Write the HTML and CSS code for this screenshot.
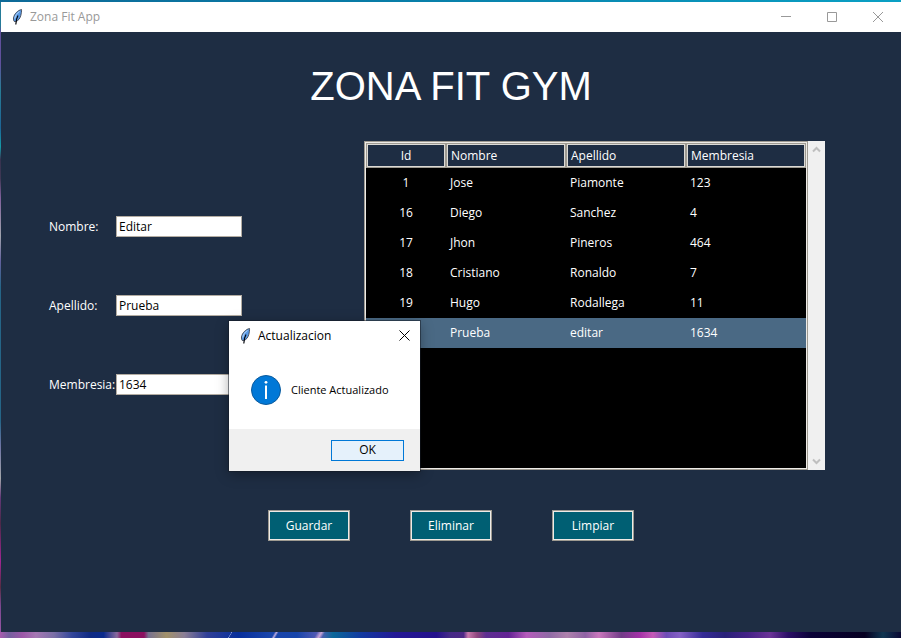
FILE: index.html
```html
<!DOCTYPE html>
<html lang="es">
<head>
<meta charset="utf-8">
<title>Zona Fit App</title>
<link rel="stylesheet" href="styles.css">
</head>
<body>
<svg class="defs" aria-hidden="true">
  <symbol id="feather" viewBox="0 0 16 16">
    <path d="M12.500.5C9 1.200 5 5 4.500 9c-.1 1.500 0 2.500.8 3.500L6.500 12.500c3-.8 4.500-3 5.300-6C12.300 4.500 12.700 2 12.500.5z" fill="#5b9be6" stroke="#30343d" stroke-width=".8"/>
    <path d="M10.500 2.500C8 4 6.300 6.500 5.800 9.500" fill="none" stroke="#b9d8fa"/>
    <path d="M9 6.500C7.800 8.500 7 11 6.800 15.500" fill="none" stroke="#05070c" stroke-width="1.200"/>
  </symbol>
</svg>
<div class="window">
  <header class="titlebar">
    <svg class="feather"><use href="#feather"/></svg>
    <span class="titlebar-text">Zona Fit App</span>
    <div class="controls">
      <button class="control" aria-label="Minimizar"><svg viewBox="0 0 10 10"><path d="M0 4.500h10"/></svg></button>
      <button class="control" aria-label="Maximizar"><svg viewBox="0 0 10 10"><path d="M.5.5h9v9h-9z"/></svg></button>
      <button class="control" aria-label="Cerrar"><svg viewBox="0 0 10 10"><path d="M0 0l10 10M10 0L0 10"/></svg></button>
    </div>
  </header>
  <main class="app">
    <h1 class="heading">ZONA FIT GYM</h1>
    <div class="content">
      <form class="form">
        <label for="nombre">Nombre:</label><input id="nombre" type="text" value="Editar">
        <label for="apellido">Apellido:</label><input id="apellido" type="text" value="Prueba">
        <label for="membresia">Membresia:</label><input id="membresia" type="text" value="1634">
      </form>
      <div class="list">
        <div class="tree">
          <table>
            <colgroup><col class="col-id"><col><col><col></colgroup>
            <thead><tr><th>Id</th><th>Nombre</th><th>Apellido</th><th>Membresia</th></tr></thead>
            <tbody>
              <tr><td>1</td><td>Jose</td><td>Piamonte</td><td>123</td></tr>
              <tr><td>16</td><td>Diego</td><td>Sanchez</td><td>4</td></tr>
              <tr><td>17</td><td>Jhon</td><td>Pineros</td><td>464</td></tr>
              <tr><td>18</td><td>Cristiano</td><td>Ronaldo</td><td>7</td></tr>
              <tr><td>19</td><td>Hugo</td><td>Rodallega</td><td>11</td></tr>
              <tr class="selected"><td></td><td>Prueba</td><td>editar</td><td>1634</td></tr>
            </tbody>
          </table>
        </div>
        <div class="scrollbar">
          <button class="arrow" aria-label="Subir" disabled><svg viewBox="0 0 9 7"><path d="M1 5.500l3.500-3.500L8 5.500"/></svg></button>
          <button class="arrow" aria-label="Bajar" disabled><svg viewBox="0 0 9 7"><path d="M1 1.500L4.500 5 8 1.500"/></svg></button>
        </div>
      </div>
    </div>
    <div class="actions">
      <button class="action">Guardar</button>
      <button class="action">Eliminar</button>
      <button class="action">Limpiar</button>
    </div>
  </main>
  <dialog class="dialog" open aria-labelledby="dialog-title">
    <div class="dialog-bar">
      <svg class="feather"><use href="#feather"/></svg>
      <span id="dialog-title">Actualizacion</span>
      <button class="dialog-close" aria-label="Cerrar"><svg viewBox="0 0 11 11"><path d="M.5.5l10 10M10.500.5l-10 10"/></svg></button>
    </div>
    <div class="dialog-body">
      <svg class="info" viewBox="0 0 30 30">
        <circle cx="15" cy="15" r="14.500" fill="#0078d7" stroke="#0b5a9c"/>
        <path d="M15 10.500v13.500" stroke="#fff" stroke-width="2"/>
        <circle cx="15" cy="7.300" r="1.400" fill="#fff"/>
      </svg>
      <span class="message">Cliente Actualizado</span>
    </div>
    <div class="dialog-footer"><button class="ok">OK</button></div>
  </dialog>
</div>
</body>
</html>
```
FILE: styles.css
```css
* {
  box-sizing: border-box;
}

body {
  margin: 0;
  min-height: 100vh;
  padding: 2px 0 6px 1px;
  display: flex;
  font: 12px/16px "Open Sans", "Noto Sans", sans-serif;
  background:
    linear-gradient(90deg, #0d6a98, #087ba6 40%, #0aa0c4) top / 100% 2px no-repeat,
    linear-gradient(120deg, transparent 49%, #8fa3dd 50%, transparent 52%) 210px bottom / 40px 6px no-repeat,
    linear-gradient(120deg, transparent 45%, #b9a9dd 50%, transparent 55%) 255px bottom / 40px 6px no-repeat,
    linear-gradient(120deg, transparent 40%, #c9a6d6 50%, transparent 58%) 300px bottom / 40px 6px no-repeat,
    linear-gradient(90deg,
      #a85cae 0, #75609f 2%, #9c58a8 5%, #a578b3 8%, #7a6fa6 12%, #33469a 16%, #102b83 20%, #0b2b8c 23%,
      #8a6a9c 26%, #8b1060 27%, #8b1060 32%, #77718f 33%, #a1916a 37%, #8a7e96 41%, #303f97 46%,
      #082f9b 53%, #1a45ab 60%, #1745aa 66%, #5a5cb4 71%, #0b6899 74%, #123ba0 80%, #241895 88%, #24118b 97%, #452a86 100%)
      left bottom / 450px 6px no-repeat,
    linear-gradient(90deg,
      #452a86 0, #4d2885 3%, #c979ac 4%, #8f477e 6%, #5d2f91 8%, #632394 13%, #b55bbb 17%,
      #8f6aa5 22%, #ae82ac 26%, #8e62a4 30%, #ca78bd 33%, #713c87 38%, #a331a7 42%, #c55ab7 45%,
      #6e4cb6 48%, #8561c5 51%, #352c96 56%, #292178 61%, #452287 66%, #6b3497 71%, #2b0f66 75%,
      #0b0238 80%, #060021 92%, #103651 96%, #0a0833 100%)
      450px bottom / calc(100% - 450px) 6px no-repeat,
    linear-gradient(#247b98 0, #247b98 4%, #60509c 5%, #60509c 10%, #287d95 14%, #1d6495 20%, #159aa8 23%,
      #37324f 25%, #3f3855 28%, #80609b 31%, #a0a4ad 37%, #62609d 41%, #256587 45%, #256587 66%, #6f75a5 70%,
      #a2a5a9 75%, #623878 78%, #4b2947 82%, #a02692 88%, #552c42 92%, #7a4890 95%, #9c58a8 100%)
      left / 1px 100% no-repeat;
}

button {
  font: inherit;
  padding: 0;
}

svg {
  display: block;
}

.defs {
  position: absolute;
  width: 0;
  height: 0;
}

.window {
  position: relative;
  flex: 1;
  display: flex;
  flex-direction: column;
  background: #1e2d43;
}

.titlebar {
  display: flex;
  align-items: center;
  height: 30px;
  padding-left: 8px;
  background: #fff;
  color: #999;
}

.feather {
  width: 16px;
  height: 16px;
  margin-right: 5px;
}

.controls {
  display: flex;
  align-self: stretch;
  margin-left: auto;
}

.control {
  display: grid;
  place-items: center;
  width: 46px;
  border: 0;
  background: none;
}

.control svg {
  width: 10px;
  height: 10px;
  fill: none;
  stroke: #999;
}

.app {
  color: #fff;
}

.heading {
  margin: 30px 0 31px;
  font: 40px/48px "Liberation Sans", Arial, sans-serif;
  text-align: center;
}

.content {
  display: flex;
  justify-content: center;
  align-items: center;
  gap: 122px;
  padding-right: 28px;
}

.form {
  display: grid;
  grid-template-columns: 67px 126px;
  row-gap: 58px;
  align-items: center;
}

.form input {
  width: 100%;
  height: 21px;
  padding: 0 2px;
  border: 1px solid #b3aca2;
  background: #fff;
  color: #000;
  font: inherit;
}

.list {
  display: flex;
}

.tree {
  height: 329px;
  border: 1px solid #9e9a91;
  outline: 1px solid #eeebe7;
  outline-offset: -2px;
  padding: 1px;
  background: #000;
}

table {
  width: 440px;
  table-layout: fixed;
  border-collapse: separate;
  border-spacing: 0;
}

.col-id {
  width: 80px;
}

th {
  height: 25px;
  padding: 0 4px;
  border: 1px solid #9e9a91;
  box-shadow: inset 0 0 0 1px #dcdad5;
  background: #1e2d43;
  font-weight: 400;
  text-align: left;
}

td {
  height: 30px;
  padding: 0 4px;
}

th:first-child,
td:first-child {
  text-align: center;
}

.selected {
  background: #4a6984;
}

.scrollbar {
  display: flex;
  flex-direction: column;
  justify-content: space-between;
  width: 17px;
  background: #f0f0f0;
}

.arrow {
  display: grid;
  place-items: center;
  height: 17px;
  border: 0;
  background: none;
}

.arrow svg {
  width: 9px;
  height: 7px;
  fill: none;
  stroke: #bfbfbf;
  stroke-width: 2;
}

.actions {
  display: flex;
  justify-content: center;
  gap: 60px;
  margin: 40px 0;
}

.action {
  width: 82px;
  height: 31px;
  border: 1px solid #9e9a91;
  box-shadow: inset 0 0 0 1px #eeebe7;
  background: #005f73;
  color: #fff;
}

.dialog {
  position: absolute;
  left: 228px;
  top: 319px;
  width: 191px;
  margin: 0;
  padding: 0;
  border: 0;
  background: #fff;
  color: #000;
  box-shadow: 0 0 0 1px rgba(20, 25, 35, 0.5), 0 3px 12px rgba(0, 0, 0, 0.35);
}

.dialog-bar {
  display: flex;
  align-items: center;
  height: 29px;
  padding: 0 10px 0 8px;
}

.dialog-close {
  margin-left: auto;
  border: 0;
  background: none;
}

.dialog-close svg {
  width: 11px;
  height: 11px;
  fill: none;
  stroke: #000;
}

.dialog-body {
  display: flex;
  align-items: center;
  gap: 10px;
  height: 79px;
  padding-left: 22px;
}

.message {
  font-size: 11px;
}

.info {
  width: 30px;
  height: 30px;
}

.dialog-footer {
  display: flex;
  justify-content: flex-end;
  align-items: center;
  height: 42px;
  padding-right: 16px;
  background: #f0f0f0;
}

.ok {
  width: 73px;
  height: 21px;
  border: 1px solid #0078d7;
  background: #e5f1fb;
  color: #000;
}
```
